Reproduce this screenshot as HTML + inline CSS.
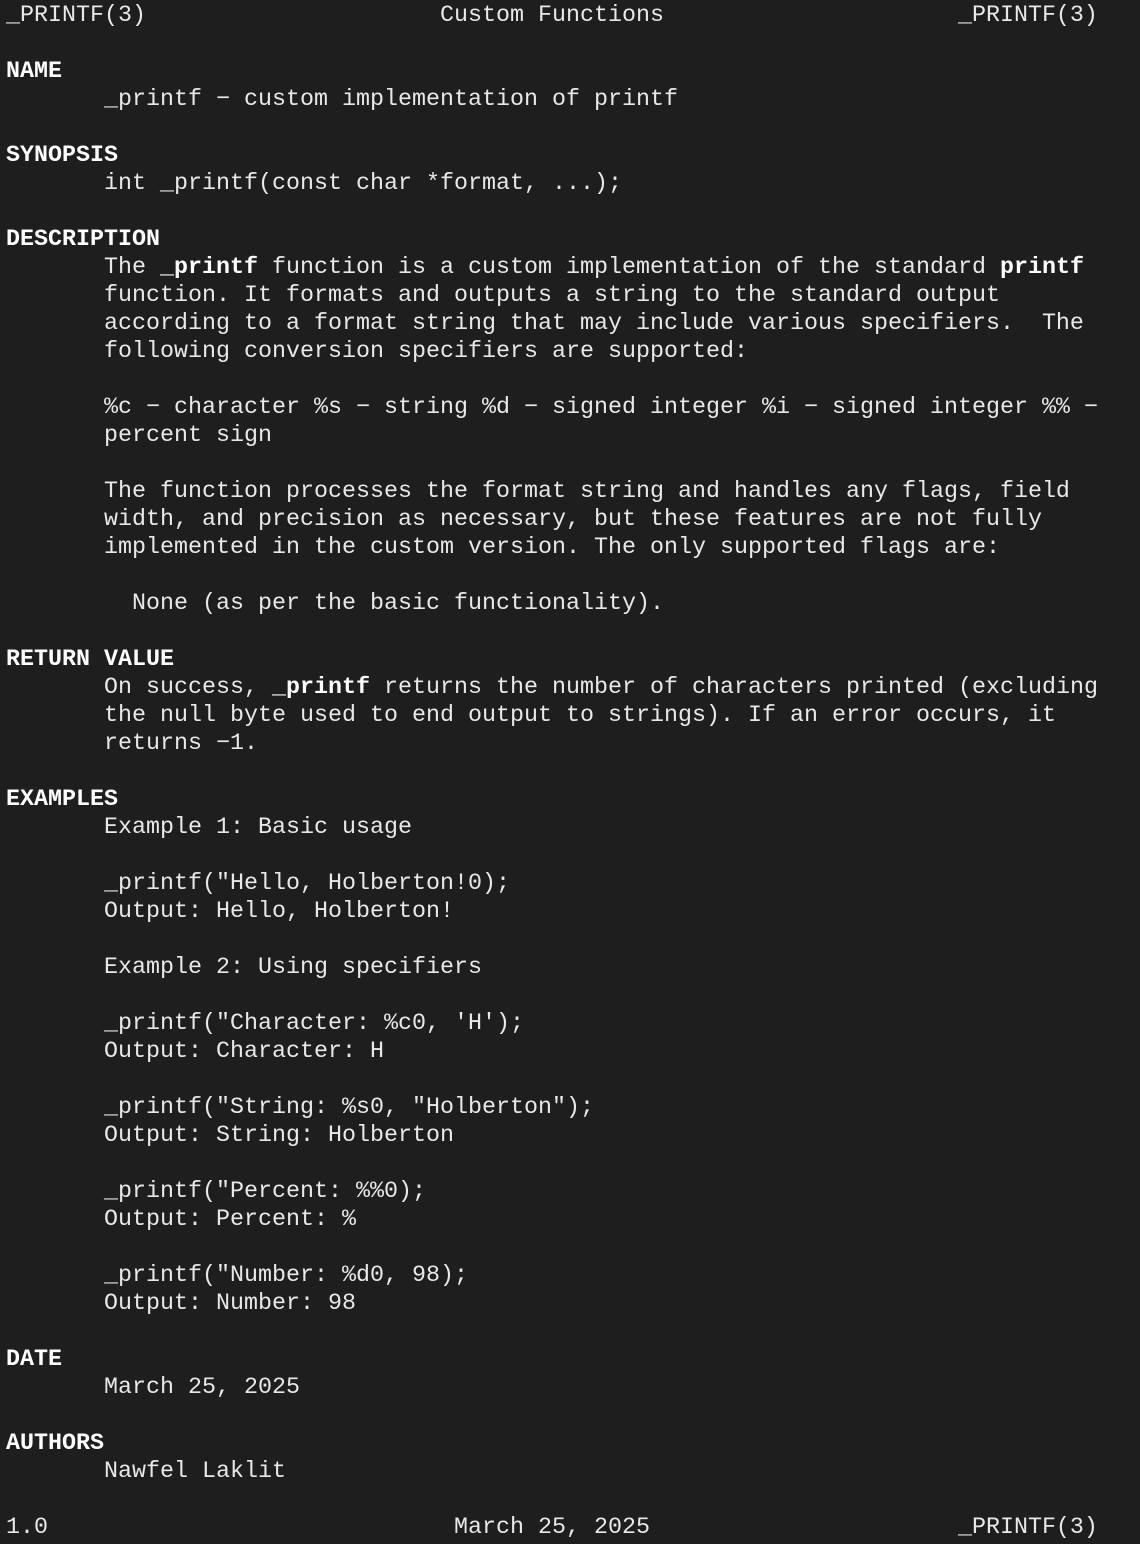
<!DOCTYPE html>
<html><head><meta charset="utf-8"><style>
html,body{margin:0;padding:0;background:#1e1e1e;width:1140px;height:1544px;overflow:hidden}
pre{margin:0;padding:2px 0 0 6px;font-family:"Liberation Mono",monospace;font-size:23.33px;line-height:28px;color:#e8e8e8;white-space:pre}
b{color:#fff;font-weight:bold}
</style></head><body><pre>_PRINTF(3)                     Custom Functions                     _PRINTF(3)

<b>NAME</b>
       _printf − custom implementation of printf

<b>SYNOPSIS</b>
       int _printf(const char *format, ...);

<b>DESCRIPTION</b>
       The <b>_printf</b> function is a custom implementation of the standard <b>printf</b>
       function. It formats and outputs a string to the standard output
       according to a format string that may include various specifiers.  The
       following conversion specifiers are supported:

       %c − character %s − string %d − signed integer %i − signed integer %% −
       percent sign

       The function processes the format string and handles any flags, field
       width, and precision as necessary, but these features are not fully
       implemented in the custom version. The only supported flags are:

         None (as per the basic functionality).

<b>RETURN VALUE</b>
       On success, <b>_printf</b> returns the number of characters printed (excluding
       the null byte used to end output to strings). If an error occurs, it
       returns −1.

<b>EXAMPLES</b>
       Example 1: Basic usage

       _printf("Hello, Holberton!0);
       Output: Hello, Holberton!

       Example 2: Using specifiers

       _printf("Character: %c0, 'H');
       Output: Character: H

       _printf("String: %s0, "Holberton");
       Output: String: Holberton

       _printf("Percent: %%0);
       Output: Percent: %

       _printf("Number: %d0, 98);
       Output: Number: 98

<b>DATE</b>
       March 25, 2025

<b>AUTHORS</b>
       Nawfel Laklit

1.0                             March 25, 2025                      _PRINTF(3)</pre></body></html>
